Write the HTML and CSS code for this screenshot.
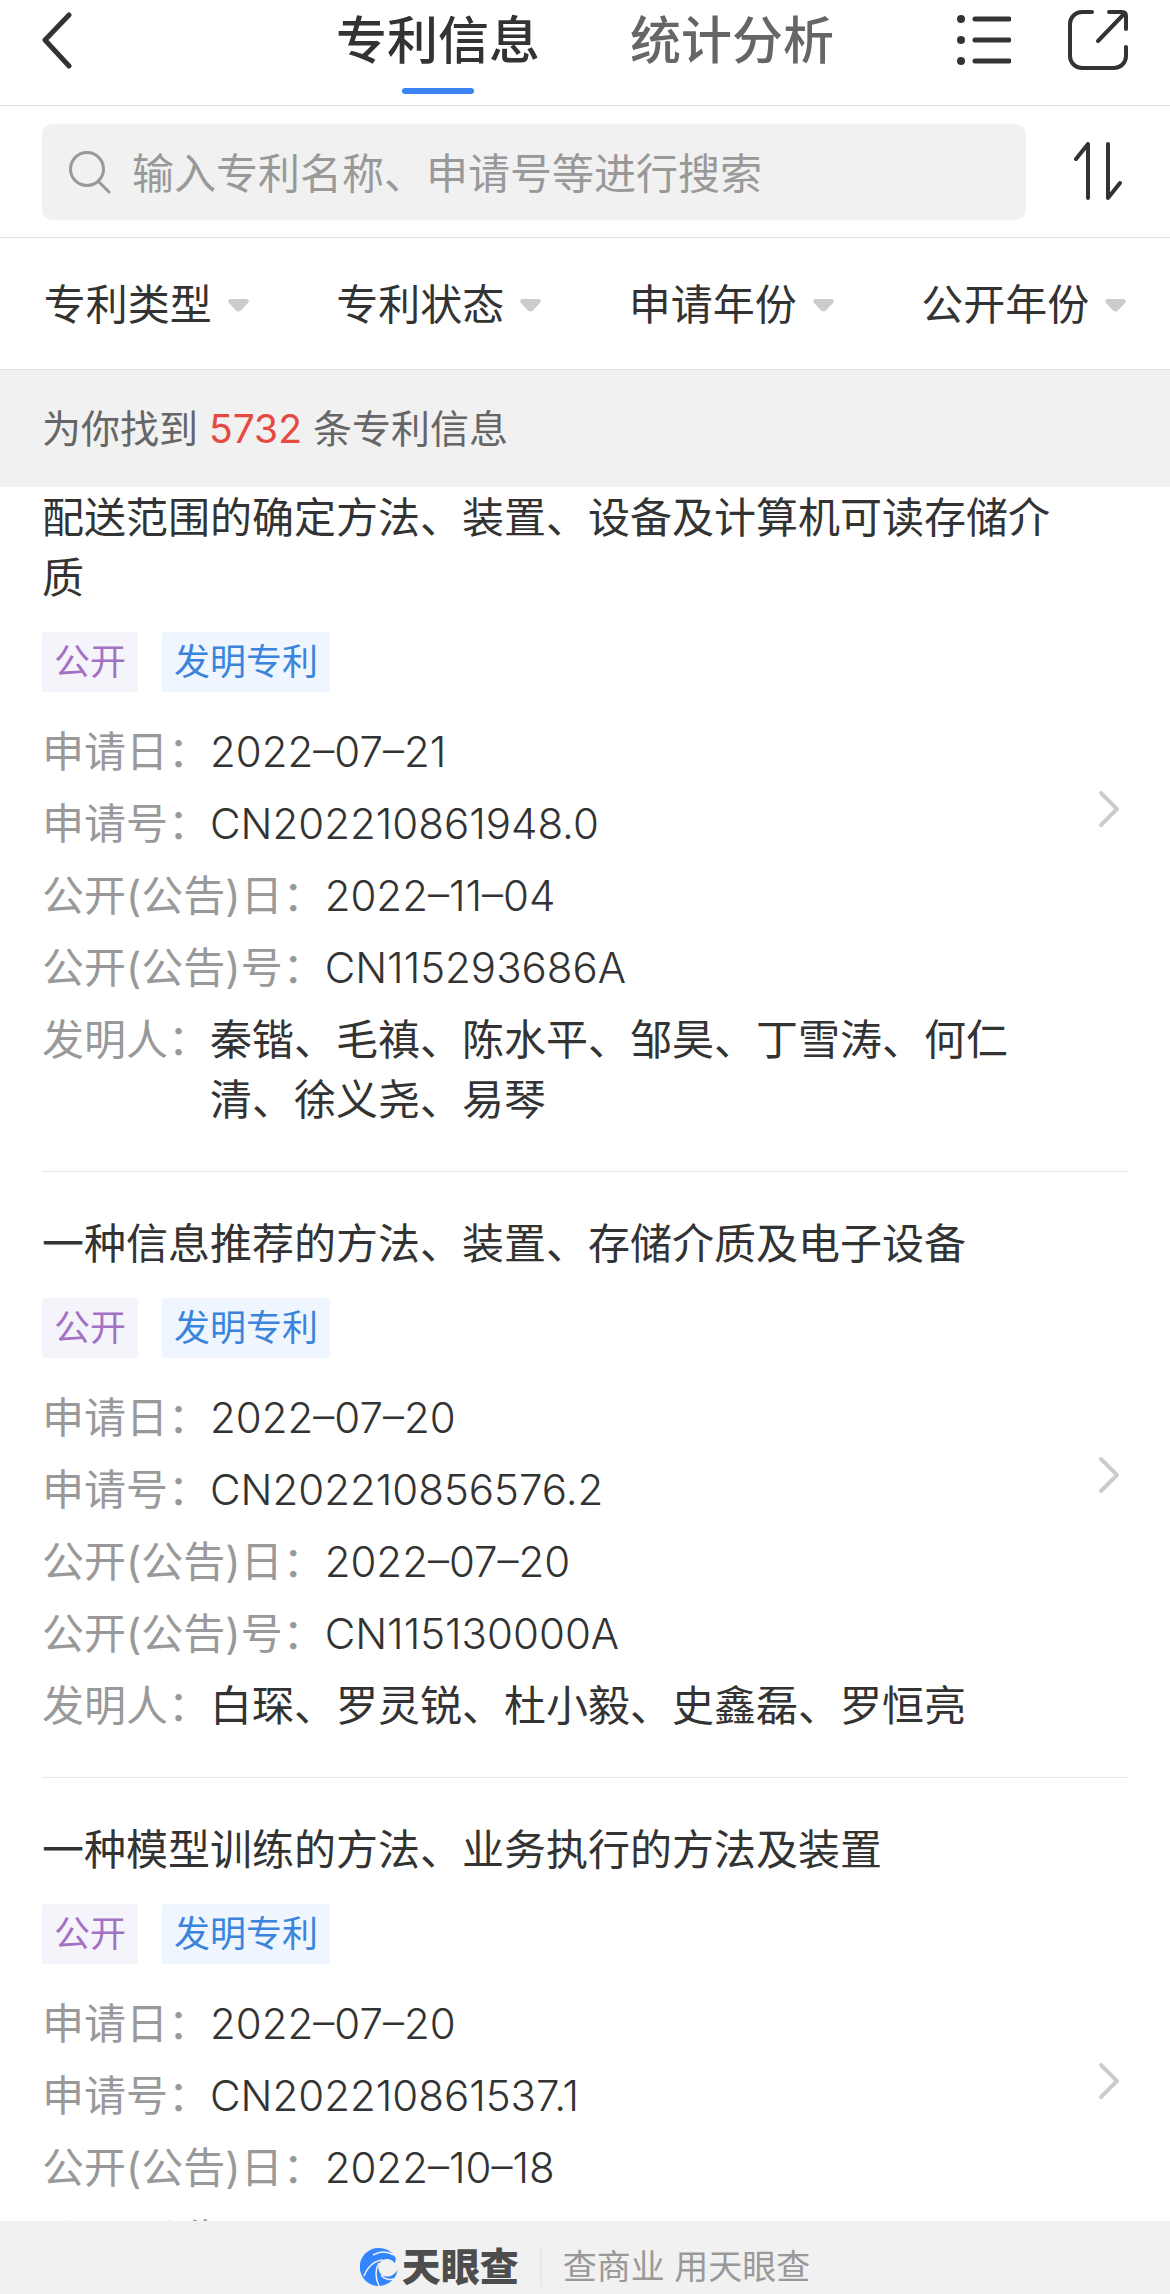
FILE: index.html
```html
<!DOCTYPE html>
<html lang="zh-CN">
<head>
    <meta charset="UTF-8">
    <meta name="viewport" content="width=device-width, initial-scale=1.0">
    <title>专利信息</title>
    <link rel="stylesheet" href="styles.css">
</head>
<body>
    <header class="header">
        <button class="icon-btn" type="button" aria-label="返回">
            <svg width="30" height="64" viewBox="0 0 30 64" fill="none" stroke="#333" stroke-width="5" stroke-linecap="round" stroke-linejoin="round"><path d="M27 7 3 32 27 58"/></svg>
        </button>
        <nav class="tabs">
            <a class="tab active" href="#list">专利信息</a>
            <a class="tab" href="#stats">统计分析</a>
        </nav>
        <div class="actions">
            <button class="icon-btn" type="button" aria-label="目录">
                <svg width="54" height="50" viewBox="0 0 54 50"><g fill="#333"><circle cx="4" cy="4" r="4"/><circle cx="4" cy="25" r="4"/><circle cx="4" cy="46" r="4"/></g><path d="M18 4h34M18 25h34M18 46h34" stroke="#333" stroke-width="5" stroke-linecap="round"/></svg>
            </button>
            <button class="icon-btn" type="button" aria-label="分享">
                <svg width="60" height="60" viewBox="0 0 60 60" fill="none" stroke="#333" stroke-width="4" stroke-linecap="round" stroke-linejoin="round"><path d="M24 2H14A12 12 0 0 0 2 14V46A12 12 0 0 0 14 58H46A12 12 0 0 0 58 46V37M41 2H54Q58 2 58 6V19M56 4 30 31"/></svg>
            </button>
        </div>
    </header>

    <form class="search" role="search">
        <label class="search-box">
            <svg width="42" height="43" viewBox="0 0 42 43" fill="none" stroke="#999" stroke-width="3" stroke-linecap="round"><circle cx="18" cy="18" r="16.500"/><path d="M30 31 40 41"/></svg>
            <input class="search-input" type="search" aria-label="搜索专利" placeholder="输入专利名称、申请号等进行搜索">
        </label>
        <button class="icon-btn" type="button" aria-label="排序">
            <svg width="48" height="60" viewBox="0 0 48 60" fill="none" stroke="#333" stroke-width="4" stroke-linecap="round" stroke-linejoin="round"><path d="M2 17 14 2V56M34 2V56L46 41"/></svg>
        </button>
    </form>

    <div class="filters">
        <label class="filter">
            <select aria-label="专利类型"><option>专利类型</option></select>
            <svg width="21" height="13" viewBox="0 0 21 13"><path d="M2 0H19Q22 1 20 4L13 11.500Q10.500 13.500 8 11.500L1 4Q-1 1 2 0Z" fill="#ccc"/></svg>
        </label>
        <label class="filter">
            <select aria-label="专利状态"><option>专利状态</option></select>
            <svg width="21" height="13" viewBox="0 0 21 13"><path d="M2 0H19Q22 1 20 4L13 11.500Q10.500 13.500 8 11.500L1 4Q-1 1 2 0Z" fill="#ccc"/></svg>
        </label>
        <label class="filter">
            <select aria-label="申请年份"><option>申请年份</option></select>
            <svg width="21" height="13" viewBox="0 0 21 13"><path d="M2 0H19Q22 1 20 4L13 11.500Q10.500 13.500 8 11.500L1 4Q-1 1 2 0Z" fill="#ccc"/></svg>
        </label>
        <label class="filter">
            <select aria-label="公开年份"><option>公开年份</option></select>
            <svg width="21" height="13" viewBox="0 0 21 13"><path d="M2 0H19Q22 1 20 4L13 11.500Q10.500 13.500 8 11.500L1 4Q-1 1 2 0Z" fill="#ccc"/></svg>
        </label>
    </div>

    <p class="result-count">为你找到 <span class="count">5732</span> 条专利信息</p>

    <main class="list" id="list">
        <article class="patent">
            <div class="patent-body">
                <h2 class="title">配送范围的确定方法、装置、设备及计算机可读存储介质</h2>
                <div class="tags">
                    <span class="tag tag-status">公开</span>
                    <span class="tag tag-type">发明专利</span>
                </div>
                <dl class="fields">
                    <div class="field"><dt>申请日：</dt><dd class="num">2022–07–21</dd></div>
                    <div class="field"><dt>申请号：</dt><dd class="num">CN202210861948.0</dd></div>
                    <div class="field"><dt>公开(公告)日：</dt><dd class="num">2022–11–04</dd></div>
                    <div class="field"><dt>公开(公告)号：</dt><dd class="num">CN115293686A</dd></div>
                    <div class="field"><dt>发明人：</dt><dd>秦锴、毛禛、陈水平、邹昊、丁雪涛、何仁清、徐义尧、易琴</dd></div>
                </dl>
            </div>
            <svg class="arrow" width="22" height="38" viewBox="0 0 22 38" fill="none" stroke="#ccc" stroke-width="4" stroke-linecap="round" stroke-linejoin="round"><path d="M3 3 19 19 3 35"/></svg>
        </article>

        <article class="patent">
            <div class="patent-body">
                <h2 class="title">一种信息推荐的方法、装置、存储介质及电子设备</h2>
                <div class="tags">
                    <span class="tag tag-status">公开</span>
                    <span class="tag tag-type">发明专利</span>
                </div>
                <dl class="fields">
                    <div class="field"><dt>申请日：</dt><dd class="num">2022–07–20</dd></div>
                    <div class="field"><dt>申请号：</dt><dd class="num">CN202210856576.2</dd></div>
                    <div class="field"><dt>公开(公告)日：</dt><dd class="num">2022–07–20</dd></div>
                    <div class="field"><dt>公开(公告)号：</dt><dd class="num">CN115130000A</dd></div>
                    <div class="field"><dt>发明人：</dt><dd>白琛、罗灵锐、杜小毅、史鑫磊、罗恒亮</dd></div>
                </dl>
            </div>
            <svg class="arrow" width="22" height="38" viewBox="0 0 22 38" fill="none" stroke="#ccc" stroke-width="4" stroke-linecap="round" stroke-linejoin="round"><path d="M3 3 19 19 3 35"/></svg>
        </article>

        <article class="patent">
            <div class="patent-body">
                <h2 class="title">一种模型训练的方法、业务执行的方法及装置</h2>
                <div class="tags">
                    <span class="tag tag-status">公开</span>
                    <span class="tag tag-type">发明专利</span>
                </div>
                <dl class="fields">
                    <div class="field"><dt>申请日：</dt><dd class="num">2022–07–20</dd></div>
                    <div class="field"><dt>申请号：</dt><dd class="num">CN202210861537.1</dd></div>
                    <div class="field"><dt>公开(公告)日：</dt><dd class="num">2022–10–18</dd></div>
                    <div class="field"><dt>公开(公告)号：</dt><dd></dd></div>
                    <div class="field"><dt>发明人：</dt><dd></dd></div>
                </dl>
            </div>
            <svg class="arrow" width="22" height="38" viewBox="0 0 22 38" fill="none" stroke="#ccc" stroke-width="4" stroke-linecap="round" stroke-linejoin="round"><path d="M3 3 19 19 3 35"/></svg>
        </article>
    </main>

    <footer class="footer">
        <div class="brand">
            <svg width="38" height="38" viewBox="0 0 38 38">
                <path d="M19 0C26 0 33 4 35.500 10C36 12 35.500 14 34.500 15C32 11 27 10 23 12C17 15 17 23 22 27C27 30 33 29 37.500 22A19 19 0 1 1 19 0Z" fill="#3385ff"/>
                <g fill="none" stroke="#f1f1f1" stroke-width="1.500">
                    <path d="M13 7Q23 1 34 7M4 28Q10 13 23 12M19 15Q13 25 19 38M21 27Q26 33 34 31"/>
                </g>
            </svg>
            <strong class="brand-name">天眼查</strong>
        </div>
        <span class="slogan">查商业 用天眼查</span>
    </footer>
</body>
</html>
```
FILE: styles.css
```css
* {
    box-sizing: border-box;
}

body {
    display: flex;
    flex-direction: column;
    height: 100vh;
    margin: 0;
    overflow: hidden;
    background-color: #fff;
    color: #333;
    font-family: Inter, "Noto Sans CJK SC", sans-serif;
    font-size: 42px;
    line-height: 60px;
}

svg {
    display: block;
    flex: none;
}

.icon-btn {
    display: flex;
    align-items: center;
    height: 64px;
    padding: 0;
    border: none;
    background: none;
    cursor: pointer;
}

/* top bar */
.header {
    display: grid;
    grid-template-columns: 1fr auto 1fr;
    align-items: start;
    padding: 8px 42px 11px;
    border-bottom: 1px solid #e0e0e0;
}

.tabs {
    display: flex;
    gap: 90px;
}

.tab {
    display: flex;
    flex-direction: column;
    align-items: center;
    gap: 14px;
    color: #666;
    font-size: 51px;
    font-weight: 500;
    line-height: 66px;
    text-decoration: none;
}

.tab::after {
    content: "";
    width: 72px;
    height: 6px;
    border-radius: 3px;
}

.tab.active {
    color: #333;
}

.tab.active::after {
    background-color: #3a84f6;
}

.actions {
    display: flex;
    justify-content: flex-end;
    gap: 57px;
}

/* search */
.search {
    display: flex;
    align-items: center;
    gap: 48px;
    padding: 18px 48px 17px 42px;
    border-bottom: 1px solid #e0e0e0;
}

.search-box {
    display: flex;
    flex: 1;
    align-items: center;
    gap: 21px;
    height: 96px;
    padding: 0 27px;
    border-radius: 10px;
    background-color: #f1f1f1;
}

.search-input {
    flex: 1;
    min-width: 0;
    height: 62px;
    padding: 2px 0 0;
    border: none;
    outline: none;
    background: none;
    color: #333;
    font: inherit;
}

.search-input::placeholder {
    color: #999;
}

/* filters */
.filters {
    display: grid;
    grid-template-columns: repeat(4, 1fr);
    border-bottom: 1px solid #e0e0e0;
}

.filter {
    display: flex;
    align-items: center;
    justify-content: center;
    gap: 15px;
    height: 131px;
    padding-top: 3px;
}

.filter select {
    padding: 0;
    border: none;
    appearance: none;
    background: none;
    color: #333;
    font: inherit;
}

.result-count {
    margin: 0;
    padding: 29px 42px 28px;
    background-color: #f1f1f1;
    color: #666;
    font-size: 39px;
}

.count {
    color: #e6493f;
}

/* patent list */
.list {
    flex: 1;
    min-height: 0;
    padding: 1px 42px 0;
    overflow: hidden;
}

.patent {
    display: flex;
    align-items: center;
    justify-content: space-between;
    padding: 42px 8px 41px 0;
    border-bottom: 1px solid #e6e6e6;
}

/* list is scrolled past the top padding of the first card */
.patent:first-child {
    margin-top: -42px;
}

.patent-body {
    width: 1010px;
    max-width: 94%;
}

.title {
    margin: 0;
    font-size: 42px;
    font-weight: 400;
}

.tags {
    display: flex;
    gap: 24px;
    margin: 24px 0 30px;
}

.tag {
    padding: 0 12px;
    border-radius: 3px;
    font-size: 36px;
}

.tag-status {
    background-color: #f6f4fb;
    color: #a272c4;
}

.tag-type {
    background-color: #eff6ff;
    color: #3a84dc;
}

.fields {
    display: flex;
    flex-direction: column;
    gap: 12px;
    margin: 0;
}

.field {
    display: flex;
}

.field dt {
    flex: none;
    color: #999;
}

.field dd {
    margin: 0;
    padding-right: 24px;
}

.field .num {
    font-weight: 300;
}

/* bottom brand bar */
.footer {
    display: flex;
    align-items: center;
    justify-content: center;
    padding: 18px 0 0;
    height: 73px;
    background-color: #f1f1f1;
}

.brand {
    display: flex;
    align-items: center;
    gap: 4px;
    padding-right: 21px;
    border-right: 2px solid #e8e8e8;
    line-height: 40px;
}

.brand-name {
    color: #4d4d4d;
    font-size: 39px;
    font-weight: 900;
}

.slogan {
    padding-left: 21px;
    color: #999;
    font-size: 34px;
    line-height: 40px;
}
```
